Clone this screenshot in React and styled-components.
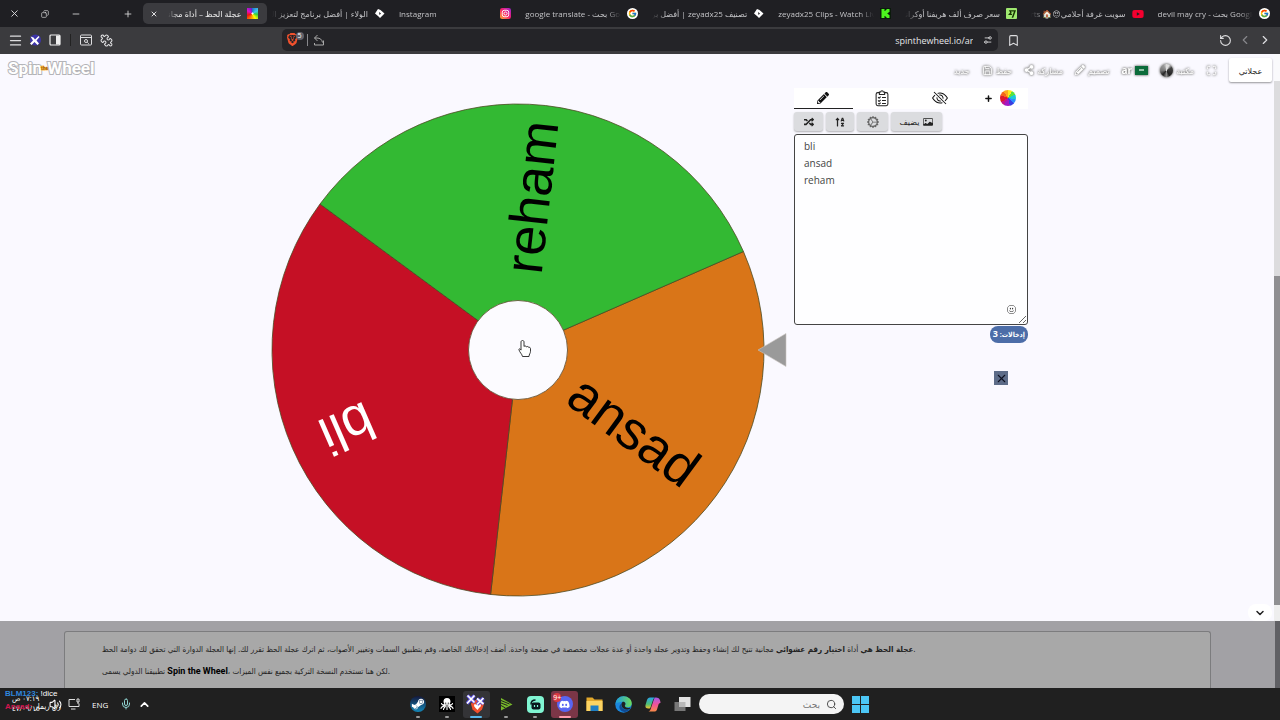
import React from 'react';
import styled, { createGlobalStyle, css } from 'styled-components';
import {
  X,
  Copy,
  Minus,
  Plus,
  Menu,
  Puzzle,
  Bookmark,
  RotateCcw,
  ChevronLeft,
  ChevronRight,
  ChevronDown,
  ChevronUp,
  Mic,
  Search,
  Settings2,
  Maximize,
  Save,
  Volume2,
} from 'lucide-react';
import { FaPencilAlt, FaRandom, FaSortAlphaUp, FaYoutube, FaDiscord, FaSteamSymbol, FaShareAlt } from 'react-icons/fa';
import { FcGoogle } from 'react-icons/fc';
import { BsEyeSlash, BsCardImage, BsEmojiSmile, BsGearWideConnected } from 'react-icons/bs';
import { SiKick, SiWise, SiBrave } from 'react-icons/si';
import { GiOctopus } from 'react-icons/gi';

const tabs = [
  { title: 'عجلة الحظ – أداة مجانية', icon: 'wheel', rtl: true, active: true },
  { title: 'الولاء | أفضل برنامج لتعزيز الولاء', icon: 'diamond', rtl: true },
  { title: 'Instagram', icon: 'instagram' },
  { title: 'google translate - بحث Google', icon: 'google' },
  { title: 'تصنيف zeyadx25 | أفضل برنامج', icon: 'diamond', rtl: true },
  { title: 'zeyadx25 Clips - Watch Live', icon: 'kick' },
  { title: 'سعر صرف ألف هريفنا أوكرانية', icon: 'wise', rtl: true },
  { title: 'سويت غرفة أحلامي😍🏠 shorts', icon: 'youtube', rtl: true },
  { title: 'devil may cry - بحث Google', icon: 'google' },
];

const slices = [
  { name: 'ansad', color: '#d97518', text: '#000', start: -23.6, end: 215 },
  { name: 'bli', color: '#c51025', text: '#fff', start: 96.4, end: 215 },
  { name: 'reham', color: '#33b933', text: '#000', start: 216.4, end: 230 },
];

const point = (angle, r) => {
  const rad = (angle * Math.PI) / 180;
  return `${(Math.cos(rad) * r).toFixed(2)} ${(Math.sin(rad) * r).toFixed(2)}`;
};

const Favicon = ({ type }) => {
  switch (type) {
    case 'wheel':
      return <ColorSquare />;
    case 'diamond':
      return (
        <svg width="11" height="11" viewBox="0 0 22 22">
          <path d="M8 2l5 2 8 7-9 9-4-4-6-5z" fill="#fff" />
          <path d="M10 8l4 3-3 3z" fill="#1f1f23" />
        </svg>
      );
    case 'instagram':
      return (
        <svg width="11" height="11" viewBox="0 0 24 24">
          <defs>
            <linearGradient id="insta" x1="0" y1="1" x2="1" y2="0">
              <stop offset="0" stopColor="#ffb02e" />
              <stop offset="0.5" stopColor="#f5206b" />
              <stop offset="1" stopColor="#9a25d8" />
            </linearGradient>
          </defs>
          <rect width="24" height="24" rx="5" fill="url(#insta)" />
          <rect x="5" y="5" width="14" height="14" rx="4" fill="none" stroke="#fff" strokeWidth="2" />
          <circle cx="12" cy="12" r="3.4" fill="none" stroke="#fff" strokeWidth="2" />
        </svg>
      );
    case 'kick':
      return (
        <KickBox>
          <SiKick size={9} />
        </KickBox>
      );
    case 'wise':
      return (
        <WiseBox>
          <SiWise size={8} />
        </WiseBox>
      );
    case 'youtube':
      return <FaYoutube size={12} color="#f4002f" />;
    default:
      return (
        <GoogleDot>
          <FcGoogle size={9} />
        </GoogleDot>
      );
  }
};

const Checklist = () => (
  <svg width="16" height="17" viewBox="0 0 24 26" fill="none" stroke="#222" strokeWidth="1.6">
    <rect x="3" y="4" width="18" height="20" rx="2.5" />
    <path d="M8 4V3h2a2 2 0 0 1 4 0h2v4H8z" fill="#fff" />
    <path d="M6 11l1.500 1.500L10 10M6 16l1.500 1.500L10 15M6 20.500l1.500 1L10 19.500M12 11.500h6M12 16h6M12 20.500h6" />
  </svg>
);

const WheelChart = () => (
  <WheelSvg viewBox="-247 -247 516 494" role="img" aria-label="عجلة الحظ">
    {slices.map(({ name, color, start }) => (
      <path
        key={name}
        d={`M0 0L${point(start, 246)}A246 246 0 0 1 ${point(start + 120, 246)}Z`}
        fill={color}
        stroke="#4b4a22"
        strokeWidth="0.8"
      />
    ))}
    {slices.map(({ name, text, start, end }) => (
      <WheelLabel key={name} x={end} y="15" fill={text} transform={`rotate(${start + 60})`}>
        {name}
      </WheelLabel>
    ))}
    <circle r="49.500" fill="#fcfbff" stroke="#5c4a2c" strokeWidth="0.8" />
    <path d="M240 0L268 -16.500V16.500Z" fill="#9a9a9a" stroke="#c9c4c0" strokeWidth="0.6" />
    {/* hand pointer */}
    <path
      d="M4.500 -9.500c1 0 1.500.7 1.500 1.500v4.500c.4-.8 2.400-.7 2.500.5.5-.8 2.200-.6 2.300.5.7-.5 1.700 0 1.700 1.200v2.600c0 2-1.500 3-1.500 5.200H4.500C4 4 1.800 2.600 1 -.1c-.4-1.300 1-1.700 2 .2V-8c0-.8.500-1.500 1.500-1.500z"
      fill="#fff"
      stroke="#222"
      strokeWidth="0.9"
    />
  </WheelSvg>
);

const BrowserChrome = () => (
  <header>
    <TabStrip>
      <WindowControls>
        <IconButton aria-label="Close"><X size={11} /></IconButton>
        <IconButton aria-label="Restore"><Copy size={8} transform="scale(-1 1)" /></IconButton>
        <IconButton aria-label="Minimize"><Minus size={10} /></IconButton>
        <IconButton aria-label="New tab"><Plus size={10} /></IconButton>
      </WindowControls>
      {tabs.map((tab, i) => (
        <Tab key={i} $active={tab.active}>
          {tab.active && <IconButton aria-label="Close tab"><X size={8} strokeWidth={3} /></IconButton>}
          <TabTitle $rtl={tab.rtl}>{tab.title}</TabTitle>
          <Favicon type={tab.icon} />
        </Tab>
      ))}
    </TabStrip>
    <Toolbar>
      <ToolGroup>
        <IconButton aria-label="Menu"><Menu size={15} /></IconButton>
        <IconButton aria-label="Assistant">
          <svg width="12" height="12" viewBox="0 0 24 24">
            <circle cx="13" cy="12" r="11" fill="#3d34a8" />
            <path d="M3 5l6 2 3 4 7-7 2 2-6 7 5 6-3 3-6-6-6 6-3-3 6-6z" fill="#fff" />
          </svg>
        </IconButton>
        <IconButton aria-label="Sidebar">
          <svg width="12" height="12" viewBox="0 0 24 24">
            <rect x="2" y="2" width="20" height="20" rx="2" fill="none" stroke="#eee" strokeWidth="2.400" />
            <path d="M14 3h8v18h-8z" fill="#eee" />
          </svg>
        </IconButton>
        <Divider />
        <IconButton aria-label="Search tabs">
          <svg width="12" height="12" viewBox="0 0 24 24" fill="none" stroke="currentColor" strokeWidth="2">
            <rect x="1" y="2" width="22" height="20" rx="2" />
            <path d="M1 7h22M14.500 16.500l3 3" />
            <circle cx="12" cy="14" r="3" />
          </svg>
        </IconButton>
        <IconButton aria-label="Extensions"><Puzzle size={13} transform="scale(-1 1)" /></IconButton>
      </ToolGroup>
      <AddressBar>
        <Shield>
          <SiBrave size={13} color="#f0512d" />
          <ShieldCount>5</ShieldCount>
        </Shield>
        <Divider $light />
        <IconButton aria-label="Share">
          <svg width="12" height="12" viewBox="0 0 24 24" fill="none" stroke="#aaa" strokeWidth="2">
            <path d="M9 2L3 8l6 6M3 8h5c6 0 10 3 11 9M3 18v4h18v-9" />
          </svg>
        </IconButton>
        <Url aria-label="Address" defaultValue="spinthewheel.io/ar" />
        <IconButton aria-label="Site settings"><Settings2 size={10} transform="scale(-1 1)" /></IconButton>
      </AddressBar>
      <ToolGroup>
        <IconButton aria-label="Bookmark"><Bookmark size={13} /></IconButton>
        <Spacer />
        <IconButton aria-label="Reload"><RotateCcw size={13} /></IconButton>
        <IconButton aria-label="Forward" $dim><ChevronLeft size={14} /></IconButton>
        <IconButton aria-label="Back"><ChevronRight size={14} /></IconButton>
      </ToolGroup>
    </Toolbar>
  </header>
);

const SiteHeader = () => (
  <SiteBar>
    <Logo href="#">
      Spin<small>the</small>Wheel
    </Logo>
    <SiteNav>
      <NavLink href="#">جديد</NavLink>
      <NavLink href="#"><Save size={11} />حفظ</NavLink>
      <NavLink href="#"><FaShareAlt size={10} />مشاركة</NavLink>
      <NavLink href="#"><FaPencilAlt size={10} />تصميم</NavLink>
      <NavLink href="#"><b>ar</b><Flag /></NavLink>
      <NavLink href="#"><Avatar />مكتبة</NavLink>
      <NavLink href="#" aria-label="Full screen"><Maximize size={11} /></NavLink>
      <MyWheels>عجلاتي</MyWheels>
    </SiteNav>
  </SiteBar>
);

const EntryPanel = () => (
  <Panel>
    <PanelTabs>
      <PanelTab $active aria-label="Entries"><FaPencilAlt size={12} /></PanelTab>
      <PanelTab aria-label="Results"><Checklist /></PanelTab>
      <PanelTab aria-label="Hide"><BsEyeSlash size={16} /></PanelTab>
      <PanelTab aria-label="Add wheel">
        <Plus size={9} strokeWidth={4} />
        <RainbowWheel />
      </PanelTab>
    </PanelTabs>
    <PanelActions>
      <ActionButton $width={29} aria-label="Shuffle"><FaRandom size={10} /></ActionButton>
      <ActionButton $width={28} aria-label="Sort"><FaSortAlphaUp size={10} /></ActionButton>
      <ActionButton $width={31} aria-label="Settings"><BsGearWideConnected size={12} color="#666" /></ActionButton>
      <ActionButton $width={51}>يضيف<BsCardImage size={10} /></ActionButton>
    </PanelActions>
    <EntryBox>
      <EntryText aria-label="Entries" defaultValue={'bli\nansad\nreham'} spellCheck={false} />
      <EmojiButton aria-label="Emoji"><BsEmojiSmile size={9} /></EmojiButton>
    </EntryBox>
    <EntryCount>إدخالات: <span>3</span></EntryCount>
    <CloseBox aria-label="Close"><X size={13} /></CloseBox>
  </Panel>
);

const Taskbar = () => (
  <TaskbarRow>
    <Tray>
      <Clock>
        <span>٠٧:١٩ ص</span>
        <span>٤٧/٠٩/١٥</span>
      </Clock>
      <Volume2 size={13} />
      <svg width="12" height="12" viewBox="0 0 24 24" fill="none" stroke="#ddd" strokeWidth="2">
        <path d="M14 3H2v14h20v-6M6 22h9M18 2h4v6h-4zM20 8v4" />
      </svg>
      <Lang>ENG</Lang>
      <Mic size={12} color="#8fd3d0" />
      <ChevronUp size={13} strokeWidth={3} />
    </Tray>
    <Apps>
      <TaskButton aria-label="Steam" $open>
        <SteamDisc><FaSteamSymbol size={14} /></SteamDisc>
      </TaskButton>
      <TaskButton aria-label="Octopus" $open>
        <BlackBox>
          <svg width="14" height="14" viewBox="0 0 28 28" fill="none" stroke="#fff" strokeWidth="2.200" strokeLinecap="round">
            <path d="M14 2c5 0 7 3.500 7 7 0 3-2 4-2 6.500h-10C9 13 7 12 7 9c0-3.500 2-7 7-7z" fill="#fff" stroke="none" />
            <path d="M9 15c-3 2-5 0-6-2M9 17c-3 3-7 2-7 6M11 17c0 4-4 4-4 8M19 15c3 2 5 0 6-2M19 17c3 3 7 2 7 6M17 17c0 4 4 4 4 8M14 16v9" />
            <path d="M11.500 12v.5M16.500 12v.5" stroke="#000" />
          </svg>
        </BlackBox>
      </TaskButton>
      <TaskButton aria-label="Brave" $bg="#343437" $line="#58b7ea">
        <svg width="20" height="20" viewBox="0 0 40 40">
          <path d="M14 12h18l4 8-4 11-9 8-10-8-3-11z" fill="#f04f2c" />
          <path d="M17 20l6 2 6-2 1 4-4 4-3 4-4-4-3-4z" fill="#fff" />
          <path d="M3 3l14 14M17 3L2 19M22 9l13 11M35 8L22 21" stroke="#5a4ee0" strokeWidth="7" />
          <path d="M3 3l14 14M17 3L2 19M22 9l13 11M35 8L22 21" stroke="#fff" strokeWidth="3.500" />
        </svg>
      </TaskButton>
      <TaskButton aria-label="Player" $open>
        <svg width="14" height="14" viewBox="0 0 28 28">
          <path d="M4 2l23 13L4 27z" fill="#76b82a" />
          <path d="M4 12l13 5M4 17l9 5M4 7l17 7" stroke="#202020" strokeWidth="2" />
        </svg>
      </TaskButton>
      <TaskButton aria-label="Robot" $open>
        <svg width="17" height="17" viewBox="0 0 34 34">
          <rect width="34" height="34" rx="8" fill="#80f5d2" />
          <path d="M8 17c0-7 5-9 9-9" fill="none" stroke="#09161d" strokeWidth="3" />
          <rect x="9" y="13" width="18" height="14" rx="4" fill="#09161d" />
          <path d="M15 18v4M21 18v4" stroke="#80f5d2" strokeWidth="2.400" />
        </svg>
      </TaskButton>
      <TaskButton aria-label="Discord" $bg="#7b3647" $line="#ff9cab">
        <DiscordDisc><FaDiscord size={11} /></DiscordDisc>
        <Unread>9+</Unread>
      </TaskButton>
      <TaskButton aria-label="Files">
        <svg width="17" height="16" viewBox="0 0 34 32">
          <path d="M1 3h12l4 4h16v23H1z" fill="#e2a82b" />
          <path d="M1 10h32v20H1z" fill="#fcd462" />
          <path d="M9 30V19h16v11z" fill="#1f7fc4" />
        </svg>
      </TaskButton>
      <TaskButton aria-label="Edge">
        <svg width="17" height="17" viewBox="0 0 34 34">
          <defs>
            <linearGradient id="edge" x1="0" y1="0" x2="1" y2="0">
              <stop offset="0" stopColor="#1c9be0" />
              <stop offset="1" stopColor="#6fdc5c" />
            </linearGradient>
          </defs>
          <circle cx="17" cy="17" r="16.500" fill="#1a86dc" />
          <path d="M1 16C2 6 9 .5 17 .5c9 0 16.500 6 16.500 14 0 5-4 8-8 8s-7-1-6-3c3-4 1-8-4-8-6 0-12 2-14.500 4.500z" fill="url(#edge)" />
          <path d="M13 15c-2 8 4 13 12 12 3 0 5-1 6-2-4 7-12 9-18 5-6-5-5-12 0-15z" fill="#0f4a94" />
          <path d="M19.500 19.500c3-4 1-8-4-8 -3 2-3 6-2 9 1 4 6 7 11 6.500 4 0 6-2 7-4-4 2-11 1-12-3.500z" fill="#202020" />
        </svg>
      </TaskButton>
      <TaskButton aria-label="Copilot">
        <svg width="16" height="15" viewBox="0 0 32 30">
          <defs>
            <linearGradient id="copilotA" x1="0" y1="0" x2="0" y2="1">
              <stop offset="0" stopColor="#2ba5e8" />
              <stop offset="0.6" stopColor="#4bbf76" />
              <stop offset="1" stopColor="#f3c22b" />
            </linearGradient>
            <linearGradient id="copilotB" x1="0" y1="0" x2="0" y2="1">
              <stop offset="0" stopColor="#a45be8" />
              <stop offset="0.5" stopColor="#f0529a" />
              <stop offset="1" stopColor="#f98b46" />
            </linearGradient>
          </defs>
          <path d="M22 1c-2 0-3 1-4 3l-6 18c-1 4-2 6-5 7h12c2 0 4-1 5-4l3-10c1-2 2-3 4-3 0-5-2-11-9-11z" fill="url(#copilotB)" />
          <path d="M10 1h10c-2 1-3 2-4 5l-5 15c-1 2-2 2-4 2-5 0-7-2-6-7l3-10c1-3 3-5 6-5z" fill="url(#copilotA)" />
        </svg>
      </TaskButton>
      <TaskButton aria-label="Task view">
        <svg width="17" height="16" viewBox="0 0 34 32">
          <path d="M1 12h22v18H1z" fill="#777" />
          <path d="M10 2h23v20H10z" fill="#e3e3e3" />
          <path d="M10 12h13v10H10z" fill="#b9b9b9" />
        </svg>
      </TaskButton>
    </Apps>
    <TaskSearch>
      <input type="search" placeholder="بحث" aria-label="بحث" dir="rtl" />
      <Search size={11} color="#444" transform="scale(1 1)" />
    </TaskSearch>
    <TaskButton aria-label="Start">
      <svg width="17" height="17" viewBox="0 0 17 17" fill="#4cc6f4">
        <path d="M0 0h8v8H0zM9 0h8v8H9zM0 9h8v8H0zM9 9h8v8H9z" />
      </svg>
    </TaskButton>
    <ChatOverlay>
      <div><ChatName $color="#2f86dd">BLM123:</ChatName> !dice</div>
      <div><ChatName $color="#d3154f">Ansad:</ChatName> زق ريمار</div>
    </ChatOverlay>
  </TaskbarRow>
);

const App = () => {
  return (
    <>
      <GlobalStyle />
      <Screen>
        <BrowserChrome />
        <Viewport>
          <Stage>
            <SiteHeader />
            <Main>
              <WheelChart />
              <EntryPanel />
            </Main>
            <ScrollHint>
              <button aria-label="Scroll down"><ChevronDown size={12} strokeWidth={3} /></button>
            </ScrollHint>
          </Stage>
          <ScrollTrack />
        </Viewport>
        <About>
          <AboutCard>
            <p>
              <b>عجلة الحظ هي</b> أداة <b>اختيار رقم عشوائي</b> مجانية تتيح لك إنشاء وحفظ وتدوير عجلة واحدة أو عدة
              عجلات مخصصة في صفحة واحدة. أضف إدخالاتك الخاصة، وقم بتطبيق السمات وتغيير الأصوات، ثم اترك عجلة الحظ
              تقرر لك. إنها العجلة الدوارة التي تحقق لك دوامة الحظ.
            </p>
            <p>
              تطبيقنا الدولي يسمى <strong>Spin the Wheel</strong>، لكن هنا تستخدم النسخة التركية بجميع نفس الميزات.
            </p>
          </AboutCard>
        </About>
        <Taskbar />
      </Screen>
    </>
  );
};

export default App;

const GlobalStyle = createGlobalStyle`
  * {
    box-sizing: border-box;
  }
  body {
    margin: 0;
    background: #faf9ff;
    font-family: 'Open Sans', 'DejaVu Sans', sans-serif;
  }
  button, input, textarea {
    font: inherit;
    color: inherit;
    background: none;
    border: 0;
    padding: 0;
    margin: 0;
  }
  svg {
    flex: none;
  }
`;

const Screen = styled.div`
  min-height: 100vh;
  display: flex;
  flex-direction: column;
`;

const IconButton = styled.button`
  display: grid;
  place-items: center;
  width: 16px;
  height: 16px;
  flex: none;
  color: ${({ $dim }) => ($dim ? '#88888c' : '#dedee0')};
`;

const TabStrip = styled.div`
  display: flex;
  height: 27px;
  background: #1f1f23;
  color: #c3c3c6;
`;

const WindowControls = styled.div`
  display: flex;
  align-items: center;
  gap: 15px;
  width: 142px;
  padding-left: 6px;
  flex: none;
  ${IconButton}:last-child {
    margin-left: auto;
    margin-right: 6px;
  }
`;

const Tab = styled.div`
  flex: 1;
  min-width: 0;
  display: flex;
  align-items: center;
  gap: 6px;
  margin: 3px 1px;
  padding: 0 9px 0 3px;
  border-radius: 5px;
  font-size: 8px;
  ${({ $active }) =>
    $active &&
    css`
      background: #3b3b3f;
      color: #eee;
    `}
`;

const TabTitle = styled.span`
  flex: 1;
  min-width: 0;
  overflow: hidden;
  white-space: nowrap;
  direction: ${({ $rtl }) => ($rtl ? 'rtl' : 'ltr')};
  mask-image: linear-gradient(to ${({ $rtl }) => ($rtl ? 'left' : 'right')}, #000 85%, transparent);
`;

const ColorSquare = styled.i`
  width: 11px;
  height: 11px;
  background: radial-gradient(#fff 12%, transparent 14%),
    conic-gradient(#27c, #40c8f0 60deg, #2ecc40 100deg, #ff0 150deg, #f80 200deg, #e11 250deg, #d1c 300deg, #52c);
`;

const RainbowWheel = styled.i`
  width: 16px;
  height: 16px;
  border-radius: 50%;
  background: conic-gradient(
    #ffe81a 0 30deg, #5ae23e 30deg 65deg, #1cc9d6 65deg 100deg, #2b8dff 100deg 135deg,
    #3a3ee0 135deg 165deg, #a019c4 165deg 210deg, #c5148c 210deg 240deg, #e01a2c 240deg 290deg,
    #f5661c 290deg 325deg, #fca91c 325deg
  );
`;

const KickBox = styled.i`
  display: grid;
  place-items: center;
  width: 11px;
  height: 11px;
  background: #0b1a0b;
  color: #4cf51e;
`;

const WiseBox = styled(KickBox)`
  background: #9fe870;
  color: #163300;
  border-radius: 1px;
`;

const GoogleDot = styled(KickBox)`
  background: #fff;
  border-radius: 50%;
`;

const Toolbar = styled.div`
  display: grid;
  grid-template-columns: 22% 1fr 22%;
  height: 27px;
  padding-bottom: 1px;
  align-items: center;
  background: #3b3b3e;
`;

const ToolGroup = styled.div`
  display: flex;
  align-items: center;
  gap: 4px;
  padding: 0 7px;
`;

const Spacer = styled.div`
  flex: 1;
`;

const Divider = styled.span`
  width: 1px;
  height: 12px;
  margin: 0 3px;
  background: ${({ $light }) => ($light ? '#88888c' : '#222')};
`;

const AddressBar = styled.div`
  display: flex;
  align-items: center;
  height: 22px;
  padding: 0 2px;
  border-radius: 5px;
  background: #242428;
`;

const Shield = styled.span`
  position: relative;
  width: 20px;
  height: 14px;
  padding: 0 2px;
  svg {
    display: block;
  }
`;

const ShieldCount = styled.span`
  position: absolute;
  top: -1px;
  right: 0;
  width: 8px;
  border-radius: 4px;
  background: #62626b;
  color: #fff;
  font-size: 7px;
  line-height: 8px;
  text-align: center;
`;

const Url = styled.input`
  flex: 1;
  min-width: 0;
  margin-right: 7px;
  color: #e6e6e8;
  font-size: 9px;
  text-align: right;
`;

const Viewport = styled.div`
  flex: 1;
  display: flex;
`;

const Stage = styled.div`
  flex: 1;
  display: flex;
  flex-direction: column;
  min-width: 0;
`;

const ScrollTrack = styled.div`
  width: 6px;
  background: linear-gradient(#fafafc 27px, #dcdcde 27px 222px, #8f8f92 222px calc(100% - 16px), #eee 0);
`;

const SiteBar = styled.header`
  display: flex;
  justify-content: space-between;
  align-items: flex-start;
  height: 34px;
  padding: 4px 2px 0 8px;
`;

const Logo = styled.a`
  display: flex;
  align-items: center;
  color: #fff;
  font: 700 17px/20px Roboto, sans-serif;
  text-decoration: none;
  -webkit-text-stroke: 2px #b4b4b8;
  paint-order: stroke fill;
  small {
    margin: 0 -1px;
    font-size: 5px;
    color: #a35b00;
    -webkit-text-stroke: 1px #ffc04d;
  }
`;

const SiteNav = styled.nav`
  display: flex;
  align-items: center;
  gap: 12px;
`;

const NavLink = styled.a`
  display: flex;
  align-items: center;
  gap: 3px;
  color: #fff;
  font-size: 8px;
  text-decoration: none;
  filter: drop-shadow(0 0 1px #777) drop-shadow(0 0 1px #aaa);
  b {
    font-size: 10px;
  }
`;

const Flag = styled.i`
  width: 13px;
  height: 9px;
  background: linear-gradient(#8fc0a5, #8fc0a5) center / 5px 2px no-repeat, #0b6b3a;
`;

const Avatar = styled.i`
  width: 13px;
  height: 13px;
  border-radius: 50%;
  background: conic-gradient(#ddd 25deg, #444 60deg, #333 100deg, #222 150deg, #888 180deg, #222 220deg, #777 270deg, #999 330deg, #ddd);
`;

const MyWheels = styled.button`
  width: 43px;
  height: 24px;
  border-radius: 2px;
  background: #fff;
  color: #222;
  font-size: 8px;
  box-shadow: 0 1px 2px rgba(0, 0, 0, 0.4);
`;

const Main = styled.main`
  flex: 1;
  display: flex;
  justify-content: center;
  align-items: flex-start;
  gap: 7px;
  padding-left: 25px;
`;

const WheelSvg = styled.svg`
  width: 516px;
  margin: 15px 0 7px;
`;

const WheelLabel = styled.text`
  font: 54px 'Liberation Sans', Arial, sans-serif;
  text-anchor: end;
`;

const Panel = styled.section`
  display: flex;
  flex-direction: column;
  width: 234px;
`;

const PanelTabs = styled.div`
  display: grid;
  grid-template-columns: repeat(4, 1fr);
  height: 21px;
  background: #fff;
`;

const PanelTab = styled.button`
  display: flex;
  align-items: center;
  justify-content: center;
  gap: 7px;
  color: #111;
  border-bottom: 1px solid ${({ $active }) => ($active ? '#222' : 'transparent')};
  &:last-child {
    justify-content: flex-end;
    padding-right: 12px;
  }
`;

const PanelActions = styled.div`
  display: flex;
  gap: 3px;
  padding: 3px 0;
`;

const ActionButton = styled.button`
  display: flex;
  align-items: center;
  justify-content: center;
  gap: 4px;
  width: ${({ $width }) => $width}px;
  height: 19px;
  border-radius: 3px;
  background: #dbdcdf;
  color: #222;
  font-size: 8px;
  box-shadow: 0 1px 2px rgba(0, 0, 0, 0.3);
`;

const EntryBox = styled.div`
  position: relative;
  height: 191px;
`;

const EntryText = styled.textarea`
  display: block;
  width: 100%;
  height: 100%;
  padding: 3px 9px;
  border: 1px solid #444;
  border-radius: 3px;
  background: #fefeff;
  color: #444;
  font: 10px/17px 'Open Sans', sans-serif;
`;

const EmojiButton = styled.button`
  position: absolute;
  right: 12px;
  bottom: 11px;
  display: grid;
  color: #222;
`;

const EntryCount = styled.span`
  align-self: flex-end;
  margin-top: 1px;
  padding: 0 3px;
  border-radius: 8px;
  background: #4c6da8;
  color: #fff;
  direction: rtl;
  font: 700 7px/16px 'Open Sans', 'DejaVu Sans Condensed', sans-serif;
  span {
    font-size: 9px;
  }
`;

const CloseBox = styled.button`
  align-self: flex-end;
  display: grid;
  place-items: center;
  width: 14px;
  height: 14px;
  margin: 28px 20px 0 0;
  background: #5d6c88;
  color: #0d1020;
`;

const ScrollHint = styled.div`
  display: flex;
  justify-content: flex-end;
  height: 17px;
  padding-right: 2px;
  button {
    display: grid;
    place-items: center;
    width: 24px;
    border-radius: 8px;
    background: #fff;
    color: #222;
  }
`;

const About = styled.section`
  display: flex;
  height: 67px;
  padding: 10px 64px 0;
  background: #a2a1a5;
  border-right: 5px solid #606064;
`;

const AboutCard = styled.article`
  flex: 1;
  padding: 7px 37px 0;
  border: 1px solid #7c7c7e;
  border-bottom: 0;
  border-radius: 3px 3px 0 0;
  background: #a8a8a8;
  color: #222;
  font: 8px/22px 'DejaVu Sans Condensed', 'DejaVu Sans', sans-serif;
  white-space: nowrap;
  overflow: hidden;
  p {
    margin: 0;
  }
  strong {
    font: 700 9px/20px Roboto, sans-serif;
    color: #000;
  }
`;

const TaskbarRow = styled.footer`
  position: relative;
  display: flex;
  justify-content: center;
  align-items: center;
  height: 32px;
  padding-right: 3px;
  background: #202020;
  color: #fff;
`;

const Tray = styled.div`
  position: absolute;
  inset: 0 auto 0 12px;
  display: flex;
  align-items: center;
  gap: 6px;
`;

const Clock = styled.div`
  display: grid;
  width: 31px;
  font-size: 7px;
  line-height: 10px;
  white-space: nowrap;
`;

const Lang = styled.span`
  margin: 0 6px;
  font-size: 8px;
`;

const Apps = styled.div`
  display: grid;
  grid-template-columns: repeat(10, 1fr);
  justify-items: center;
  width: 294px;
  margin-right: 2px;
`;

const TaskButton = styled.button`
  position: relative;
  display: grid;
  place-items: center;
  width: 27px;
  height: 27px;
  border-radius: 3px;
  background: ${({ $bg }) => $bg || 'none'};
  &::after {
    content: '';
    position: absolute;
    bottom: 0;
    width: ${({ $line }) => ($line ? 12 : 4)}px;
    height: 2px;
    border-radius: 1px;
    background: ${({ $line, $open }) => $line || ($open ? '#9a9a9a' : 'transparent')};
  }
`;

const SteamDisc = styled.i`
  display: grid;
  place-items: center;
  width: 16px;
  height: 16px;
  border-radius: 50%;
  background: linear-gradient(#14183c, #1387b8);
`;

const BlackBox = styled.i`
  display: grid;
  place-items: center;
  width: 16px;
  height: 16px;
  background: #000;
`;

const DiscordDisc = styled(SteamDisc)`
  background: #5865f2;
`;

const Unread = styled.span`
  position: absolute;
  top: 2px;
  left: 2px;
  border-radius: 5px;
  background: #d83a43;
  font-size: 7px;
  line-height: 9px;
`;

const TaskSearch = styled.label`
  display: flex;
  align-items: center;
  gap: 6px;
  width: 145px;
  height: 20px;
  margin-right: 3px;
  padding: 0 7px;
  border-radius: 10px;
  background: #f4f4f4;
  color: #777;
  font-size: 9px;
  input {
    flex: 1;
    min-width: 0;
  }
`;

const ChatOverlay = styled.div`
  position: absolute;
  left: 5px;
  top: -1px;
  font: 8px/13px 'Liberation Sans', 'DejaVu Sans Condensed', sans-serif;
  white-space: nowrap;
`;

const ChatName = styled.span`
  color: ${({ $color }) => $color};
  font-weight: 700;
`;
